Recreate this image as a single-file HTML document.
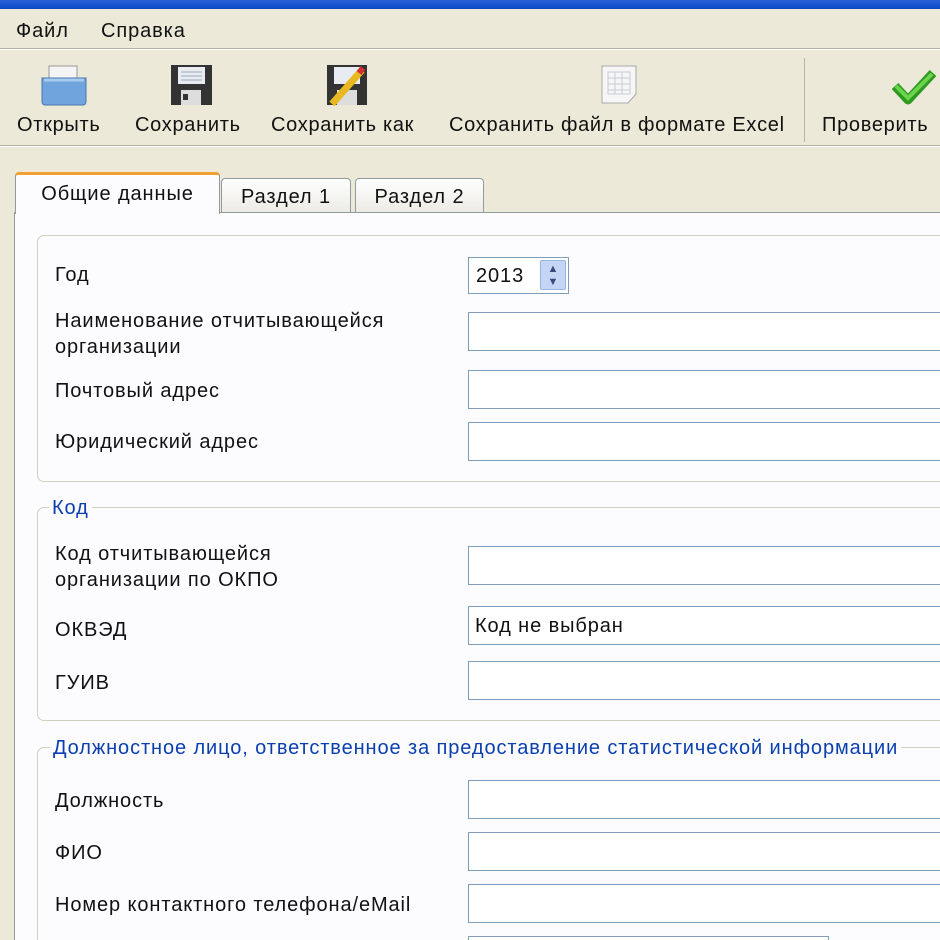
<!DOCTYPE html>
<html><head><meta charset="utf-8"><style>
*{margin:0;padding:0;box-sizing:border-box}
html{width:940px;height:940px;overflow:hidden}
body{width:940px;height:940px;overflow:hidden;background:#ece9d8;font-family:"Liberation Sans","DejaVu Sans",sans-serif;color:#111;position:relative;font-size:20px;letter-spacing:0.9px}
.a{position:absolute}
.inp{position:absolute;left:468px;width:480px;height:39px;background:#fff;border:1px solid #7f9db9}
.lbl{position:absolute;left:55px;line-height:26px}
.grp{position:absolute;left:37px;width:920px;border:1px solid #d0d0bf;border-radius:7px}
.gt{position:absolute;left:50px;color:#0a3fb0;background:#fcfcfe;padding:0 3px;line-height:24px}
.tb{position:absolute;top:113px;line-height:24px;letter-spacing:0.7px}
</style></head><body>
<div class="a" style="left:0;top:0;width:940px;height:9px;background:linear-gradient(#2a63d8,#0a47c8)"></div>
<div class="a" style="left:16px;top:18px;line-height:26px">Файл</div>
<div class="a" style="left:101px;top:18px;line-height:26px">Справка</div>
<div class="a" style="left:0;top:48px;width:940px;height:2px;background:#b5b2a2;border-bottom:1px solid #fff"></div>
<svg class="a" style="left:40px;top:64px" width="48" height="42"><rect x="9" y="2" width="28" height="20" fill="#f4f4f4" stroke="#999"/><path d="M2 14h44v24a3 3 0 0 1-3 3H5a3 3 0 0 1-3-3z" fill="#6fa4dc" stroke="#4a78b0"/><path d="M4 16h40" stroke="#a9cbf0" stroke-width="3"/></svg>
<svg class="a" style="left:170px;top:64px" width="44" height="42"><rect x="1" y="1" width="41" height="40" fill="#333"/><rect x="8" y="3" width="27" height="17" fill="#e8ecf2"/><path d="M11 8h21M11 12h21M11 16h21" stroke="#9ab"/><rect x="11" y="26" width="20" height="15" fill="#ddd"/><rect x="13" y="30" width="5" height="6" fill="#333"/></svg>
<svg class="a" style="left:326px;top:64px" width="44" height="42"><rect x="1" y="1" width="40" height="40" fill="#333"/><rect x="8" y="3" width="26" height="17" fill="#e8ecf2"/><rect x="11" y="26" width="20" height="15" fill="#ddd"/><path d="M6 40L36 6" stroke="#e8b820" stroke-width="7"/><path d="M33 9l4-5" stroke="#d03030" stroke-width="6"/></svg>
<svg class="a" style="left:600px;top:64px" width="40" height="42"><path d="M2 2h34v28l-8 9H2z" fill="#f6f6f6" stroke="#aaa"/><path d="M8 8h22v22H8zM8 14h22M8 20h22M8 26h22M15 8v22M22 8v22" stroke="#c8ccd4" fill="none"/></svg>
<svg class="a" style="left:892px;top:68px" width="44" height="38"><path d="M3 18l13 14L41 5" stroke="#2e9a22" stroke-width="9" fill="none" stroke-linejoin="round"/><path d="M4 18l12 12L40 6" stroke="#6ad44a" stroke-width="4" fill="none"/></svg>
<div class="tb" style="left:17px">Открыть</div>
<div class="tb" style="left:135px">Сохранить</div>
<div class="tb" style="left:271px">Сохранить как</div>
<div class="tb" style="left:449px">Сохранить файл в формате Excel</div>
<div class="a" style="left:804px;top:58px;width:1px;height:84px;background:#b5b2a2"></div>
<div class="tb" style="left:822px">Проверить</div>
<div class="a" style="left:0;top:145px;width:940px;height:2px;background:#b5b2a2;border-bottom:1px solid #fff"></div>
<div class="a" style="left:221px;top:178px;width:130px;height:35px;background:linear-gradient(#fff,#ecebe5);border:1px solid #919b9c;border-radius:4px 4px 0 0;text-align:center;line-height:36px">Раздел 1</div>
<div class="a" style="left:355px;top:178px;width:129px;height:35px;background:linear-gradient(#fff,#ecebe5);border:1px solid #919b9c;border-radius:4px 4px 0 0;text-align:center;line-height:36px">Раздел 2</div>
<div class="a" style="left:14px;top:212px;width:940px;height:740px;background:#fcfcfe;border:1px solid #919b9c"></div>
<div class="a" style="left:15px;top:172px;width:205px;height:42px;background:#fcfcfe;border:1px solid #919b9c;border-bottom:none;border-top:3px solid #f0a030;border-radius:4px 4px 0 0;text-align:center;line-height:38px">Общие данные</div>
<div class="grp" style="top:235px;height:247px"></div>
<div class="lbl" style="top:262px">Год</div>
<div class="a" style="left:468px;top:257px;width:101px;height:37px;background:#fff;border:1px solid #7f9db9"></div>
<div class="a" style="left:476px;top:263px;line-height:26px">2013</div>
<div class="a" style="left:540px;top:260px;width:26px;height:30px;background:#c4d5f6;border:1px solid #9ab3e0;border-radius:2px;font-size:11px;text-align:center;line-height:13px;color:#3a4a7a;padding-top:2px;letter-spacing:0">&#9650;<br>&#9660;</div>
<div class="lbl" style="top:308px">Наименование отчитывающейся<br>организации</div>
<div class="inp" style="top:312px"></div>
<div class="lbl" style="top:378px">Почтовый адрес</div>
<div class="inp" style="top:370px"></div>
<div class="lbl" style="top:429px">Юридический адрес</div>
<div class="inp" style="top:422px"></div>
<div class="grp" style="top:507px;height:214px"></div>
<div class="gt" style="top:496px;left:49px">Код</div>
<div class="lbl" style="top:541px">Код отчитывающейся<br>организации по ОКПО</div>
<div class="inp" style="top:546px"></div>
<div class="lbl" style="top:617px">ОКВЭД</div>
<div class="inp" style="top:606px;padding-left:6px;line-height:38px">Код не выбран</div>
<div class="lbl" style="top:670px">ГУИВ</div>
<div class="inp" style="top:661px"></div>
<div class="grp" style="top:747px;height:220px"></div>
<div class="gt" style="top:736px">Должностное лицо, ответственное за предоставление статистической информации</div>
<div class="lbl" style="top:788px">Должность</div>
<div class="inp" style="top:780px"></div>
<div class="lbl" style="top:840px">ФИО</div>
<div class="inp" style="top:832px"></div>
<div class="lbl" style="top:892px">Номер контактного телефона/eMail</div>
<div class="inp" style="top:884px"></div>
<div class="a" style="left:468px;top:936px;width:361px;height:20px;background:#fff;border:1px solid #7f9db9"></div>
</body></html>
